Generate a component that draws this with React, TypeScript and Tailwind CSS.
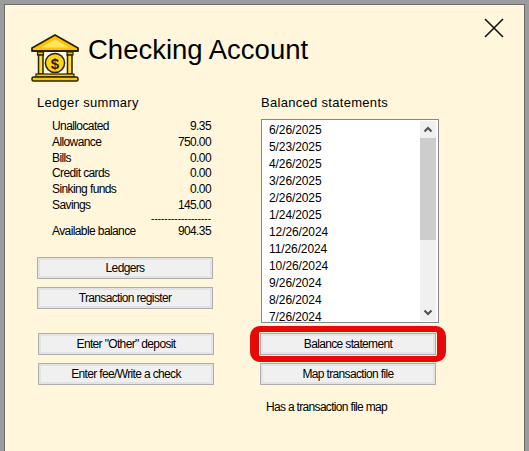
import React from 'react'

const ledger = [
  { label: 'Unallocated', value: '9.35', cls: 'h-4' },
  { label: 'Allowance', value: '750.00', cls: 'h-4' },
  { label: 'Bills', value: '0.00', cls: 'h-[15px]' },
  { label: 'Credit cards', value: '0.00', cls: 'h-4' },
  { label: 'Sinking funds', value: '0.00', cls: 'h-4' },
  { label: 'Savings', value: '145.00', cls: 'h-4' },
]

const statements = [
  '6/26/2025', '5/23/2025', '4/26/2025', '3/26/2025', '2/26/2025', '1/24/2025',
  '12/26/2024', '11/26/2024', '10/26/2024', '9/26/2024', '8/26/2024', '7/26/2024',
]

function BankIcon() {
  return (
    <svg width="48" height="48" viewBox="0 0 48 48" className="shrink-0">
      <path d="M24 1 L47 14 L47 17 L1 17 L1 14 Z" fill="#ffc400" stroke="#2a2400" strokeWidth="1.8" strokeLinejoin="round" />
      <path d="M24 5.5 L38 13.5 L10 13.5 Z" fill="#ffe45c" />
      <rect x="5" y="18" width="38" height="23" fill="#fffbe8" />
      <rect x="6.5" y="18" width="6" height="3" fill="#ffc400" stroke="#2a2400" strokeWidth="1.2" />
      <rect x="7.5" y="21" width="4.5" height="19" fill="#ffdc2e" stroke="#2a2400" strokeWidth="1.5" />
      <rect x="36" y="18" width="6" height="3" fill="#ffc400" stroke="#2a2400" strokeWidth="1.2" />
      <rect x="36.5" y="21" width="4.5" height="19" fill="#ffdc2e" stroke="#2a2400" strokeWidth="1.5" />
      <circle cx="24" cy="29" r="9.6" fill="#ffd21f" stroke="#2a2400" strokeWidth="1.5" />
      <text x="24" y="34.5" textAnchor="middle" fontSize="15" fontWeight="700" fontFamily="Liberation Sans" fill="#2b2400">$</text>
      <rect x="5" y="40" width="38" height="3" fill="#ffc400" stroke="#2a2400" strokeWidth="1.2" />
      <rect x="1" y="43" width="46" height="4" rx="1.5" fill="#ffc400" stroke="#2a2400" strokeWidth="1.5" />
    </svg>
  )
}

function FormButton({ children }: { children: React.ReactNode }) {
  return (
    <button className="block w-[176px] h-[22px] bg-[#f0f0f0] border border-[#adadad] shadow-[inset_0_0_0_2px_#e3e3e3] text-[12px] tracking-[-0.65px] text-black text-center leading-[20px]">
      {children}
    </button>
  )
}

function Chevron({ up }: { up?: boolean }) {
  return (
    <svg width="16" height="17" viewBox="0 0 16 17" className="shrink-0">
      <path d={up ? 'M4.5 10.5 L8 7 L11.5 10.5' : 'M4.5 6.5 L8 10 L11.5 6.5'} fill="none" stroke="#505050" strokeWidth="2" />
    </svg>
  )
}

export default function App() {
  return (
    <div className="w-[529px] h-[451px] overflow-hidden bg-[#9c9c9c] px-1 pt-1 font-['Liberation_Sans',Arial,sans-serif] text-black">
      <div className="h-full bg-[#fff6dc] border-t border-x border-[#6b6b6b]">
        <div className="flex justify-between pt-[13px] pl-[26px] pr-[20px]">
          <div className="flex mt-4 h-12">
            <BankIcon />
            <h1 className="ml-[9px] text-[27.5px] leading-8 whitespace-nowrap">Checking Account</h1>
          </div>
          <button className="w-5 h-5 shrink-0">
            <svg width="20" height="20" viewBox="0 0 20 20">
              <path d="M1 1 L19 19 M19 1 L1 19" stroke="#111" strokeWidth="1.6" fill="none" />
            </svg>
          </button>
        </div>

        <div className="flex mt-[13px] pl-8">
          <div className="w-[223px] shrink-0">
            <h2 className="h-4 text-[13px] leading-4 tracking-[0.3px]">Ledger summary</h2>
            <div className="mt-[7px] w-[174px] pl-[15px] text-[12px]">
              {ledger.map(row => (
                <div key={row.label} className={`flex justify-between items-center tracking-[-0.6px] ${row.cls}`}>
                  <span>{row.label}</span>
                  <span>{row.value}</span>
                </div>
              ))}
              <div className="h-[10px] pt-[2px] text-right text-[10px] leading-[8px]">------------------</div>
              <div className="flex justify-between items-center h-4 tracking-[-0.6px]">
                <span>Available balance</span>
                <span>904.35</span>
              </div>
            </div>
            <div className="mt-[18px] flex flex-col gap-2">
              <FormButton>Ledgers</FormButton>
              <FormButton>Transaction register</FormButton>
            </div>
            <div className="mt-6 ml-px flex flex-col gap-2">
              <FormButton>Enter "Other" deposit</FormButton>
              <FormButton>Enter fee/Write a check</FormButton>
            </div>
          </div>

          <div className="flex flex-col">
            <h2 className="h-4 ml-px text-[13px] leading-4 tracking-[0.3px]">Balanced statements</h2>
            <div className="mt-2 ml-px w-[178px] h-[204px] flex bg-white border border-[#828790] p-px">
              <ul className="flex-1 pl-[6px] pt-px text-[12px] tracking-[-0.1px]">
                {statements.map(s => (
                  <li key={s} className="h-[17px] leading-[17px]">{s}</li>
                ))}
              </ul>
              <div className="w-4 mr-px flex flex-col bg-[#f0f0f0]">
                <Chevron up />
                <div className="h-[102px] bg-[#cdcdcd]" />
                <div className="flex-1" />
                <Chevron />
              </div>
            </div>
            <div className="relative mt-[10px]">
              <FormButton>Balance statement</FormButton>
              <div className="absolute top-[-7px] bottom-[-7px] left-[-10px] w-[196px] border-y-[6px] border-x-[9px] border-[#e80808] rounded-[10px]" />
            </div>
            <div className="mt-2">
              <FormButton>Map transaction file</FormButton>
            </div>
            <p className="mt-[14px] ml-[6px] h-4 text-[12px] leading-4 tracking-[-0.68px]">Has a transaction file map</p>
          </div>
        </div>
      </div>
    </div>
  )
}
